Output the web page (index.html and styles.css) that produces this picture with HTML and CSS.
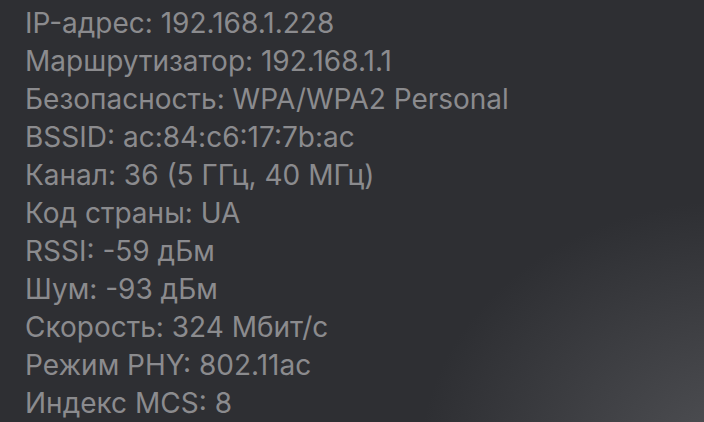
FILE: index.html
```html
<html>
    <head>
        <meta http-equiv="Content-Type" content="text/html; charset=utf-8">
        <title>Wi-Fi</title>
        <link rel="stylesheet" href="styles.css">
    </head>
    <body>
        <div class="menu">
            <ul class="infoList">
                <li>IP-адрес: 192.168.1.228</li>
                <li>Маршрутизатор: 192.168.1.1</li>
                <li>Безопасность: WPA/WPA2 Personal</li>
                <li>BSSID: ac:84:c6:17:7b:ac</li>
                <li>Канал: 36 (5 ГГц, 40 МГц)</li>
                <li>Код страны: UA</li>
                <li>RSSI: -59 дБм</li>
                <li>Шум: -93 дБм</li>
                <li>Скорость: 324 Мбит/с</li>
                <li>Режим PHY: 802.11ac</li>
                <li>Индекс MCS: 8</li>
            </ul>
        </div>
    </body>
</html>
```

FILE: styles.css
```css
body{
    margin: 0;
    background: #2e2f33;
}
.menu{
    width: 704px;
    height: 422px;
    overflow: hidden;
    background: radial-gradient(ellipse 320px 260px at 740px 460px, #505155 0%, rgba(46, 47, 51, 0) 100%), #2e2f33;
}
.infoList{
    list-style: none;
    margin: 0;
    padding: 4px 0 0 25px;
}
.infoList li{
    font-family: Inter, "Noto Sans", sans-serif;
    font-size: 28px;
    line-height: 38px;
    color: #8b8b8e;
    white-space: nowrap;
}
```
